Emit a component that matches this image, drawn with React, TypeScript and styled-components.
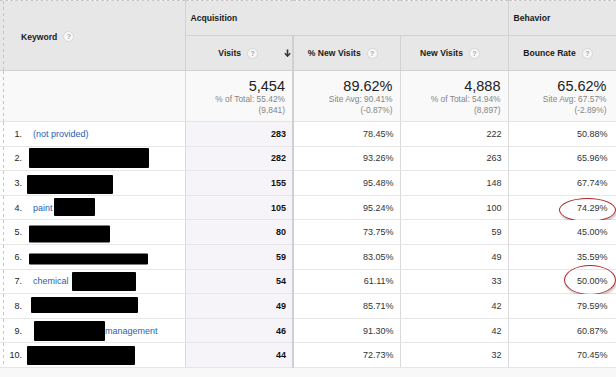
import React from 'react'
import styled, { createGlobalStyle } from 'styled-components'

type Seg = { t?: string; w?: number; h?: number; dx?: number; dy?: number }
type Ring = { x: number; y: number; w: number; h: number }
type Row = { kw: Seg[]; visits: number; pnv: string; nv: number; br: string; ring?: Ring }

const rows: Row[] = [
  { kw: [{ t: '(not provided)' }], visits: 283, pnv: '78.45%', nv: 222, br: '50.88%' },
  { kw: [{ w: 120, h: 20, dx: -4 }], visits: 282, pnv: '93.26%', nv: 263, br: '65.96%' },
  { kw: [{ w: 86, h: 19, dx: -6, dy: 2 }], visits: 155, pnv: '95.48%', nv: 148, br: '67.74%' },
  {
    kw: [{ t: 'paint' }, { w: 41, h: 18, dx: 1, dy: -1 }],
    visits: 105,
    pnv: '95.24%',
    nv: 100,
    br: '74.29%',
    ring: { x: 50, y: 2, w: 57, h: 24 }
  },
  { kw: [{ w: 81, h: 17, dx: -4, dy: 1.5 }], visits: 80, pnv: '73.75%', nv: 59, br: '45.00%' },
  { kw: [{ w: 119, h: 11, dx: -4, dy: 2.5 }], visits: 59, pnv: '83.05%', nv: 49, br: '35.59%' },
  {
    kw: [{ t: 'chemical' }, { w: 64, h: 19, dx: 3 }],
    visits: 54,
    pnv: '61.11%',
    nv: 33,
    br: '50.00%',
    ring: { x: 55, y: -5, w: 52, h: 30 }
  },
  { kw: [{ w: 107, h: 16, dx: -2, dy: -1 }], visits: 49, pnv: '85.71%', nv: 42, br: '79.59%' },
  { kw: [{ w: 71, h: 20, dx: 1 }, { t: 'management' }], visits: 46, pnv: '91.30%', nv: 42, br: '60.87%' },
  { kw: [{ w: 108, h: 19, dx: -6 }], visits: 44, pnv: '72.73%', nv: 32, br: '70.45%' }
]

const GlobalStyle = createGlobalStyle`
  html, body {
    margin: 0;
    padding: 0;
    background: #f8f8f8;
    font-family: 'Liberation Sans', Arial, sans-serif;
  }
`

const dashedLeft = (bg: string) =>
  `repeating-linear-gradient(to bottom, #c4c4c4 0 3px, transparent 3px 6px) 3px 0 / 1px 100% no-repeat, ${bg}`

const Table = styled.table`
  border-collapse: collapse;
  table-layout: fixed;
  width: 616px;
  font-family: 'Liberation Sans', Arial, sans-serif;
  color: #333;
`

const TopRow = styled.tr`
  border-top: 1px dashed #c8c8c8;
`

const KeyHead = styled.th`
  background: ${dashedLeft('#e7e7e7')};
  border-right: 1px solid #d2d2d2;
  border-bottom: 1px solid #d2d2d2;
  padding: 2px 0 0 21px;
  text-align: left;
  font-size: 8.6px;
  font-weight: bold;
  color: #1a1a1a;
`

const GroupHead = styled.th`
  height: 34px;
  background: #e7e7e7;
  border: 1px solid #d2d2d2;
  border-top: none;
  padding: 0 5px;
  text-align: left;
  font-size: 8.6px;
  font-weight: bold;
  color: #1a1a1a;
`

const MetricHead = styled.th<{ $sorted?: boolean }>`
  height: 34px;
  background: #e7e7e7;
  border: 1px solid #d2d2d2;
  border-right: ${(p) => (p.$sorted ? '2px solid #d0d0d0' : '1px solid #d2d2d2')};
  padding: ${(p) => (p.$sorted ? '0 1px 0 0' : '0 8px 0 0')};
  font-size: 8.6px;
  font-weight: bold;
  color: #1a1a1a;
`

const HeadInner = styled.div`
  display: grid;
  grid-template-columns: 1fr auto 1fr;
  align-items: center;
`

const Label = styled.span`
  display: inline-flex;
  align-items: center;
  gap: 6px;
  white-space: nowrap;
`

const Help = styled.span`
  display: inline-flex;
  align-items: center;
  justify-content: center;
  width: 9px;
  height: 9px;
  border-radius: 50%;
  background: #f8f8f8;
  border: 1px solid #d6d6d6;
  color: #a8a8a8;
  font-size: 7px;
  font-weight: bold;
  line-height: 1;
`

const SortArrow = styled.svg`
  justify-self: end;
  width: 7px;
  height: 8px;
`

const SumRow = styled.tr`
  height: 51px;
`

const SumKey = styled.td`
  background: ${dashedLeft('#f9f9f9')};
  border-right: 1px solid #d9d9d9;
  border-bottom: 1px solid #e4e4e4;
`

const SumCell = styled.td<{ $sorted?: boolean; $last?: boolean }>`
  background: #f9f9f9;
  border-right: ${(p) => (p.$sorted ? '2px solid #d0d0d0' : '1px solid #d9d9d9')};
  border-bottom: 1px solid #e4e4e4;
  padding: 1px ${(p) => (p.$last ? '9px' : '7px')} 0 0;
  text-align: right;
  vertical-align: middle;
`

const Big = styled.div`
  font-size: 14.5px;
  line-height: 16px;
  color: #222;
`

const Sub = styled.div`
  font-size: 8.4px;
  line-height: 10.5px;
  color: #858585;
`

const DataRow = styled.tr`
  height: 24.6px;
`

const KeyCell = styled.td`
  background: ${dashedLeft('#ffffff')};
  border-right: 1px solid #d9d9d9;
  border-bottom: 1px solid #e6e6e6;
  padding: 0;
`

const KeyInner = styled.div`
  display: flex;
  align-items: center;
  font-size: 9px;
  white-space: nowrap;
`

const Idx = styled.span`
  width: 22px;
  margin-right: 11px;
  text-align: right;
  color: #222;
`

const Link = styled.span`
  color: #2d60b4;
`

const Redact = styled.span<{ $w: number; $h: number; $dx: number; $dy: number }>`
  display: inline-block;
  flex: none;
  width: ${(p) => p.$w}px;
  height: ${(p) => p.$h}px;
  margin-left: ${(p) => p.$dx}px;
  transform: translateY(${(p) => p.$dy}px);
  background: #000;
  border-radius: 1px;
`

const NumCell = styled.td<{ $sorted?: boolean; $last?: boolean }>`
  position: relative;
  background: ${(p) => (p.$sorted ? '#f6f4f8' : '#ffffff')};
  border-right: ${(p) => (p.$sorted ? '2px solid #d0d0d0' : '1px solid #d9d9d9')};
  border-bottom: 1px solid #e6e6e6;
  padding: 0 ${(p) => (p.$last ? '8px' : '6px')} 0 0;
  text-align: right;
  font-size: 9px;
  font-weight: ${(p) => (p.$sorted ? 'bold' : 'normal')};
  color: ${(p) => (p.$sorted ? '#111' : '#333')};
`

const Circle = styled.span`
  position: absolute;
  box-sizing: border-box;
  border: 1.7px solid #b0242a;
  border-radius: 50%;
  box-shadow: 1px 2px 2px rgba(0, 0, 0, 0.22);
  pointer-events: none;
`

const HelpIcon = () => <Help>?</Help>

const App: React.FC = () => {
  return (
    <>
      <GlobalStyle />
      <Table>
        <colgroup>
          <col style={{ width: 185 }} />
          <col style={{ width: 108 }} />
          <col style={{ width: 107 }} />
          <col style={{ width: 108 }} />
          <col style={{ width: 108 }} />
        </colgroup>
        <thead>
          <TopRow>
            <KeyHead rowSpan={2}>
              <Label>
                Keyword <HelpIcon />
              </Label>
            </KeyHead>
            <GroupHead colSpan={3}>Acquisition</GroupHead>
            <GroupHead>Behavior</GroupHead>
          </TopRow>
          <tr>
            <MetricHead $sorted>
              <HeadInner>
                <span />
                <Label>
                  Visits <HelpIcon />
                </Label>
                <SortArrow viewBox='0 0 7 8'>
                  <path d='M3.5 0.5v6' stroke='#333' strokeWidth='1.6' fill='none' />
                  <path d='M0.8 4.2 3.5 7.2 6.2 4.2' stroke='#333' strokeWidth='1.4' fill='none' />
                </SortArrow>
              </HeadInner>
            </MetricHead>
            <MetricHead>
              <Label>
                % New Visits <HelpIcon />
              </Label>
            </MetricHead>
            <MetricHead>
              <Label>
                New Visits <HelpIcon />
              </Label>
            </MetricHead>
            <MetricHead>
              <Label>
                Bounce Rate <HelpIcon />
              </Label>
            </MetricHead>
          </tr>
        </thead>
        <tbody>
          <SumRow>
            <SumKey />
            <SumCell $sorted>
              <Big>5,454</Big>
              <Sub>% of Total: 55.42%</Sub>
              <Sub>(9,841)</Sub>
            </SumCell>
            <SumCell>
              <Big>89.62%</Big>
              <Sub>Site Avg: 90.41%</Sub>
              <Sub>(-0.87%)</Sub>
            </SumCell>
            <SumCell>
              <Big>4,888</Big>
              <Sub>% of Total: 54.94%</Sub>
              <Sub>(8,897)</Sub>
            </SumCell>
            <SumCell $last>
              <Big>65.62%</Big>
              <Sub>Site Avg: 67.57%</Sub>
              <Sub>(-2.89%)</Sub>
            </SumCell>
          </SumRow>
          {rows.map((r, i) => (
            <DataRow key={i}>
              <KeyCell>
                <KeyInner>
                  <Idx>{i + 1}.</Idx>
                  {r.kw.map((s, j) =>
                    s.t ? (
                      <Link key={j}>{s.t}</Link>
                    ) : (
                      <Redact key={j} $w={s.w ?? 0} $h={s.h ?? 0} $dx={s.dx ?? 0} $dy={s.dy ?? 0} />
                    )
                  )}
                </KeyInner>
              </KeyCell>
              <NumCell $sorted>{r.visits}</NumCell>
              <NumCell>{r.pnv}</NumCell>
              <NumCell>{r.nv}</NumCell>
              <NumCell $last>
                {r.br}
                {r.ring && (
                  <Circle style={{ left: r.ring.x, top: r.ring.y, width: r.ring.w, height: r.ring.h }} />
                )}
              </NumCell>
            </DataRow>
          ))}
        </tbody>
      </Table>
    </>
  )
}

export default App
